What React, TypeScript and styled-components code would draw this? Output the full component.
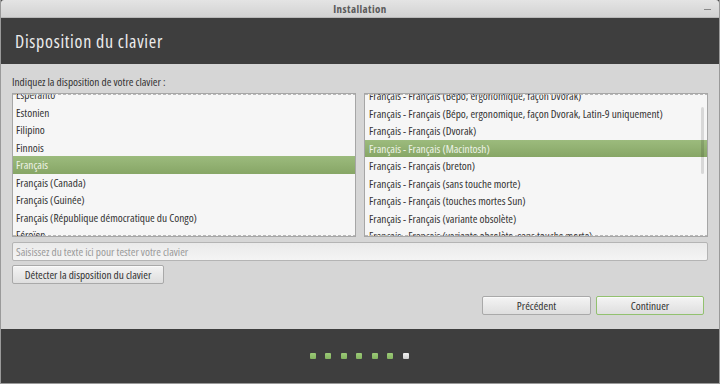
import React from 'react';
import styled, { createGlobalStyle } from 'styled-components';

const GlobalStyle = createGlobalStyle`
  html, body {
    margin: 0;
    padding: 0;
    width: 720px;
    height: 384px;
    overflow: hidden;
    background: #3e3e3e;
  }
  * {
    box-sizing: border-box;
  }
`;

const Window = styled.div`
  width: 720px;
  height: 384px;
  display: flex;
  flex-direction: column;
  border: 1px solid #9a9a9a;
  border-top: none;
  font-family: 'Open Sans', 'Noto Sans', sans-serif;
  font-stretch: condensed;
  color: #333;
`;
const TitleBar = styled.div`
  height: 18px;
  flex: none;
  display: flex;
  align-items: center;
  justify-content: center;
  position: relative;
  background: linear-gradient(#e4e4e4, #d2d2d2);
  border-bottom: 1px solid #b8b8b8;
  border-radius: 3px 3px 0 0;
`;
const Title = styled.span`
  font-size: 11px;
  font-weight: bold;
  letter-spacing: 0.4px;
  color: #5a5a5a;
`;
const Minimize = styled.span`
  position: absolute;
  right: 8px;
  top: 9px;
  width: 7px;
  height: 1px;
  background: #888;
`;
const Header = styled.div`
  height: 46px;
  flex: none;
  display: flex;
  align-items: center;
  padding-left: 14px;
  background: #3e3e3e;
`;
const Heading = styled.h1`
  margin: 0;
  font-size: 18px;
  font-weight: normal;
  letter-spacing: 0.7px;
  color: #ececec;
`;
const Body = styled.div`
  flex: 1;
  display: flex;
  flex-direction: column;
  padding: 11px 11px 0 11px;
  background: #d6d6d6;
`;
const Label = styled.div`
  font-size: 11.3px;
  line-height: 14px;
  margin-bottom: 4px;
`;
const Lists = styled.div`
  display: grid;
  grid-template-columns: 1fr 1fr;
  gap: 8px;
  height: 144px;
`;
const ListBox = styled.div`
  position: relative;
  overflow: hidden;
  background: #f6f6f6;
  border: 1px solid #a6a6a6;
  &::before,
  &::after {
    content: '';
    position: absolute;
    left: 0;
    right: 0;
    height: 1px;
    z-index: 2;
    background: repeating-linear-gradient(90deg, #b8b8b8 0 3px, transparent 3px 5px);
  }
  &::before {
    top: 0;
  }
  &::after {
    bottom: 0;
  }
`;
const ListInner = styled.div<{ offset: number }>`
  margin-top: ${(p) => p.offset}px;
`;
const Row = styled.div<{ selected?: boolean; indent: number }>`
  height: 17.5px;
  line-height: 17.5px;
  font-size: 11.3px;
  padding-left: ${(p) => p.indent}px;
  white-space: nowrap;
  color: ${(p) => (p.selected ? '#eef3e8' : '#333')};
  background: ${(p) => (p.selected ? 'linear-gradient(#9cbb7d, #87a666)' : 'transparent')};
`;
const ScrollThumb = styled.div`
  position: absolute;
  right: 3px;
  top: 13px;
  width: 3px;
  height: 67px;
  border-radius: 2px;
  background: rgba(0, 0, 0, 0.12);
  z-index: 1;
`;
const Entry = styled.div`
  margin-top: 5px;
  height: 19px;
  display: flex;
  align-items: center;
  padding-left: 3px;
  font-size: 11.3px;
  color: #9a9a9a;
  border: 1px solid #b4b4b4;
  border-radius: 2px;
  background: linear-gradient(#eaeaea, #f4f4f4);
`;
const Button = styled.button<{ width: number; primary?: boolean }>`
  width: ${(p) => p.width}px;
  height: 19px;
  padding: 0;
  font-family: inherit;
  font-stretch: condensed;
  font-size: 11.3px;
  white-space: nowrap;
  color: #333;
  border: 1px solid ${(p) => (p.primary ? '#92c16f' : '#a9a9a9')};
  border-radius: 2px;
  background: linear-gradient(#f4f4f4, #dedede);
  box-shadow: inset 0 1px 0 rgba(255, 255, 255, 0.6);
`;
const DetectRow = styled.div`
  margin-top: 4px;
  display: flex;
`;
const NavRow = styled.div`
  margin-top: 12px;
  padding-right: 4px;
  display: flex;
  justify-content: flex-end;
  gap: 5px;
`;
const Footer = styled.div`
  height: 54px;
  flex: none;
  display: flex;
  align-items: center;
  justify-content: center;
  gap: 9.5px;
  padding-right: 2px;
  background: #3e3e3e;
`;
const Dot = styled.span<{ active?: boolean }>`
  width: 6px;
  height: 6px;
  border-radius: 1px;
  background: ${(p) => (p.active ? 'linear-gradient(#f2f2f2, #cfcfcf)' : 'linear-gradient(#9ccb78, #84b460)')};
`;

const layouts = [
  'Esperanto',
  'Estonien',
  'Filipino',
  'Finnois',
  'Français',
  'Français (Canada)',
  'Français (Guinée)',
  'Français (République démocratique du Congo)',
  'Féroïen'
];

const variants = [
  'Français - Français (Bépo, ergonomique, façon Dvorak)',
  'Français - Français (Bépo, ergonomique, façon Dvorak, Latin-9 uniquement)',
  'Français - Français (Dvorak)',
  'Français - Français (Macintosh)',
  'Français - Français (breton)',
  'Français - Français (sans touche morte)',
  'Français - Français (touches mortes Sun)',
  'Français - Français (variante obsolète)',
  'Français - Français (variante obsolète, sans touche morte)'
];

const App: React.FC = () => {
  return (
    <>
      <GlobalStyle />
      <Window>
        <TitleBar>
          <Title>Installation</Title>
          <Minimize />
        </TitleBar>
        <Header>
          <Heading>Disposition du clavier</Heading>
        </Header>
        <Body>
          <Label>Indiquez la disposition de votre clavier :</Label>
          <Lists>
            <ListBox>
              <ListInner offset={-8}>
                {layouts.map((name) => (
                  <Row key={name} indent={3} selected={name === 'Français'}>
                    {name}
                  </Row>
                ))}
              </ListInner>
            </ListBox>
            <ListBox>
              <ScrollThumb />
              <ListInner offset={-7}>
                {variants.map((name) => (
                  <Row key={name} indent={4} selected={name.endsWith('(Macintosh)')}>
                    {name}
                  </Row>
                ))}
              </ListInner>
            </ListBox>
          </Lists>
          <Entry>Saisissez du texte ici pour tester votre clavier</Entry>
          <DetectRow>
            <Button width={152}>Détecter la disposition du clavier</Button>
          </DetectRow>
          <NavRow>
            <Button width={109}>Précédent</Button>
            <Button width={108} primary>
              Continuer
            </Button>
          </NavRow>
        </Body>
        <Footer>
          {[0, 1, 2, 3, 4, 5].map((i) => (
            <Dot key={i} />
          ))}
          <Dot active />
        </Footer>
      </Window>
    </>
  );
};

export default App;
